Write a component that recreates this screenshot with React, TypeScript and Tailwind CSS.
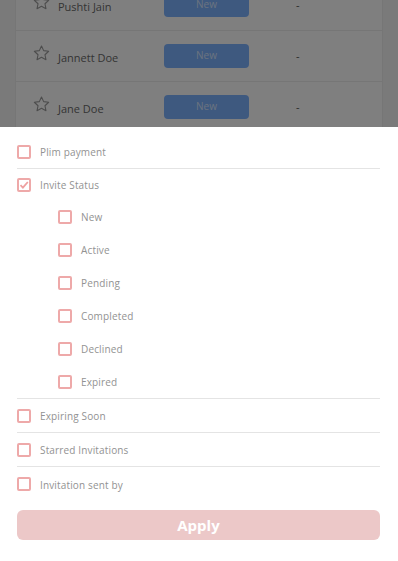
import React from 'react';

const font = { fontFamily: '"Open Sans", "Noto Sans", Arial, sans-serif' };

const people = ['Pushti Jain', 'Jannett Doe', 'Jane Doe'];

const Star = () => (
  <svg width="17" height="16" viewBox="0 0 24 23" fill="none" stroke="#9a9a9a" strokeWidth="1.6" strokeLinejoin="round">
    <path d="M12 1.5l3.1 6.6 7.2.9-5.3 5 1.4 7.1L12 17.6l-6.4 3.5 1.4-7.1-5.3-5 7.2-.9z" />
  </svg>
);

const Box = ({ checked = false }: { checked?: boolean }) => (
  <span className="w-[14px] h-[14px] shrink-0 rounded-[2px] border-2 border-[#eea9a9] flex items-center justify-center">
    {checked && (
      <svg width="10" height="10" viewBox="0 0 10 10" fill="none" stroke="#eea0a0" strokeWidth="1.8">
        <path d="M1.5 5.2l2.4 2.4L8.8 2" />
      </svg>
    )}
  </span>
);

const Label = ({ children }: { children: React.ReactNode }) => (
  <span className="text-[10px] text-[#929292] tracking-[0.15px] translate-y-[0.5px]">{children}</span>
);

const Row = ({ label, last }: { label: string; last?: boolean }) => (
  <div className={`flex items-center gap-[9px] h-[34px] ${last ? '' : 'border-b border-[#e4e4e4]'}`}>
    <Box />
    <Label>{label}</Label>
  </div>
);

const statuses = ['New', 'Active', 'Pending', 'Completed', 'Declined', 'Expired'];

export default function App() {
  return (
    <div className="w-[398px] h-[561px] flex flex-col bg-white overflow-hidden" style={font}>
      <div className="relative h-[127px] shrink-0 overflow-hidden bg-[#f4f4f4]">
        <div className="mx-[15px] mt-[-20px] bg-white border-x border-[#ececec]">
          {people.map((name) => (
            <div key={name} className="flex items-center h-[51px] border-b border-[#ececec]">
              <div className="w-[42px] flex justify-end pr-[8px] -mt-[6px]">
                <Star />
              </div>
              <span className="text-[11px] text-[#6a6a6a] w-[106px] mt-[5px]">{name}</span>
              <span className="w-[85px] h-[24px] rounded-[4px] bg-[#7cb2ff] text-white/70 text-[10px] flex items-center justify-center -mt-[1px]">
                New
              </span>
              <span className="ml-[47px] text-[#555] text-[11px]">-</span>
            </div>
          ))}
        </div>
        <div className="absolute inset-0 bg-black/50" />
      </div>

      <div className="flex-1 px-[17px] pt-[8px]">
        <div className="w-[363px]">
          <Row label="Plim payment" />
          <div className="flex items-center gap-[9px] h-[31px]">
            <Box checked />
            <Label>Invite Status</Label>
          </div>
          <div className="border-b border-[#e4e4e4]">
            {statuses.map((s) => (
              <div key={s} className="flex items-center gap-[9px] h-[33px] pl-[41px]">
                <Box />
                <Label>{s}</Label>
              </div>
            ))}
          </div>
          <Row label="Expiring Soon" />
          <Row label="Starred Invitations" />
          <Row label="Invitation sent by" last />
          <button className="mt-[9px] w-full h-[30px] rounded-[6px] bg-[#ecc8c8] text-white text-[15px] font-bold">
            Apply
          </button>
        </div>
      </div>
    </div>
  );
}
